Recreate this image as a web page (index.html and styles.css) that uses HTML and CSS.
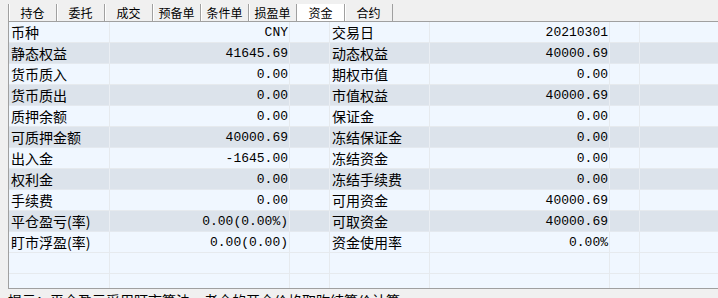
FILE: index.html
```html
<!DOCTYPE html>
<html lang="zh">
<head>
<meta charset="utf-8">
<link rel="stylesheet" href="styles.css">
</head>
<body>
<div class="panel">
  <div class="tabs">
    <div class="tab">持仓</div>
    <div class="tab">委托</div>
    <div class="tab">成交</div>
    <div class="tab">预备单</div>
    <div class="tab">条件单</div>
    <div class="tab">损盈单</div>
    <div class="tab active">资金</div>
    <div class="tab">合约</div>
  </div>
  <div class="grid">
    <div class="row">
      <div class="c lbl">币种</div><div class="c num">CNY</div><div class="c"></div>
      <div class="c lbl">交易日</div><div class="c num">20210301</div><div class="c"></div><div class="c last"></div>
    </div>
    <div class="row alt">
      <div class="c lbl">静态权益</div><div class="c num">41645.69</div><div class="c"></div>
      <div class="c lbl">动态权益</div><div class="c num">40000.69</div><div class="c"></div><div class="c last"></div>
    </div>
    <div class="row">
      <div class="c lbl">货币质入</div><div class="c num">0.00</div><div class="c"></div>
      <div class="c lbl">期权市值</div><div class="c num">0.00</div><div class="c"></div><div class="c last"></div>
    </div>
    <div class="row alt">
      <div class="c lbl">货币质出</div><div class="c num">0.00</div><div class="c"></div>
      <div class="c lbl">市值权益</div><div class="c num">40000.69</div><div class="c"></div><div class="c last"></div>
    </div>
    <div class="row">
      <div class="c lbl">质押余额</div><div class="c num">0.00</div><div class="c"></div>
      <div class="c lbl">保证金</div><div class="c num">0.00</div><div class="c"></div><div class="c last"></div>
    </div>
    <div class="row alt">
      <div class="c lbl">可质押金额</div><div class="c num">40000.69</div><div class="c"></div>
      <div class="c lbl">冻结保证金</div><div class="c num">0.00</div><div class="c"></div><div class="c last"></div>
    </div>
    <div class="row">
      <div class="c lbl">出入金</div><div class="c num">-1645.00</div><div class="c"></div>
      <div class="c lbl">冻结资金</div><div class="c num">0.00</div><div class="c"></div><div class="c last"></div>
    </div>
    <div class="row alt">
      <div class="c lbl">权利金</div><div class="c num">0.00</div><div class="c"></div>
      <div class="c lbl">冻结手续费</div><div class="c num">0.00</div><div class="c"></div><div class="c last"></div>
    </div>
    <div class="row">
      <div class="c lbl">手续费</div><div class="c num">0.00</div><div class="c"></div>
      <div class="c lbl">可用资金</div><div class="c num">40000.69</div><div class="c"></div><div class="c last"></div>
    </div>
    <div class="row alt">
      <div class="c lbl">平仓盈亏(率)</div><div class="c num">0.00(0.00%)</div><div class="c"></div>
      <div class="c lbl">可取资金</div><div class="c num">40000.69</div><div class="c"></div><div class="c last"></div>
    </div>
    <div class="row">
      <div class="c lbl">盯市浮盈(率)</div><div class="c num">0.00(0.00)</div><div class="c"></div>
      <div class="c lbl">资金使用率</div><div class="c num">0.00%</div><div class="c"></div><div class="c last"></div>
    </div>
    <div class="row">
      <div class="c"></div><div class="c"></div><div class="c"></div>
      <div class="c"></div><div class="c"></div><div class="c"></div><div class="c last"></div>
    </div>
    <div class="row">
      <div class="c"></div><div class="c"></div><div class="c"></div>
      <div class="c"></div><div class="c"></div><div class="c"></div><div class="c last"></div>
    </div>
  </div>
  <div class="hint">提示：平仓盈亏采用盯市算法，老仓的开仓价格取昨结算价计算</div>
</div>
</body>
</html>
```
FILE: styles.css
```css
html, body {
  margin: 0;
  padding: 0;
}
body {
  width: 718px;
  height: 298px;
  overflow: hidden;
  background: #f0f0f0;
  font-family: "Noto Sans CJK SC", "Noto Sans", sans-serif;
  color: #000;
}
.panel {
  margin-left: 8px;
  padding-top: 4px;
}
.tabs {
  display: flex;
  height: 17px;
  border-left: 1px solid #a0a0a0;
}
.tab {
  width: 47px;
  height: 17px;
  border-right: 1px solid #a0a0a0;
  font-size: 12px;
  line-height: 18px;
  text-align: center;
  background: #f0f0f0;
  box-shadow: inset 1px 0 0 #ffffff;
}
.tab.active {
  background: #ffffff;
}
.grid {
  border-top: 1px solid #a0a0a0;
  border-left: 1px solid #a0a0a0;
  border-bottom: 1px solid #a0a0a0;
  height: 266px;
  overflow: hidden;
  background: #f0f7ff;
}
.row {
  display: grid;
  grid-template-columns: 101px 180px 40px 100px 180px 30px 1fr;
  height: 21px;
  background: #f0f7ff;
}
.row.alt {
  background: #dce3eb;
}
.c {
  box-sizing: border-box;
  height: 21px;
  border-right: 1px solid #e6eaee;
  border-bottom: 1px solid #e6eaee;
  white-space: nowrap;
  overflow: hidden;
}
.row.alt .c {
  border-right-color: #eaeef3;
  border-bottom-color: #e4e9ef;
}
.c.last {
  border-right: none;
}
.lbl {
  font-size: 14px;
  line-height: 20px;
  padding-left: 2px;
}
.num {
  font-family: "Liberation Mono", monospace;
  font-size: 13px;
  line-height: 21px;
  text-align: right;
  padding-right: 1px;
}
.hint {
  font-size: 14px;
  line-height: 18px;
  padding-top: 2px;
  white-space: nowrap;
}
```
